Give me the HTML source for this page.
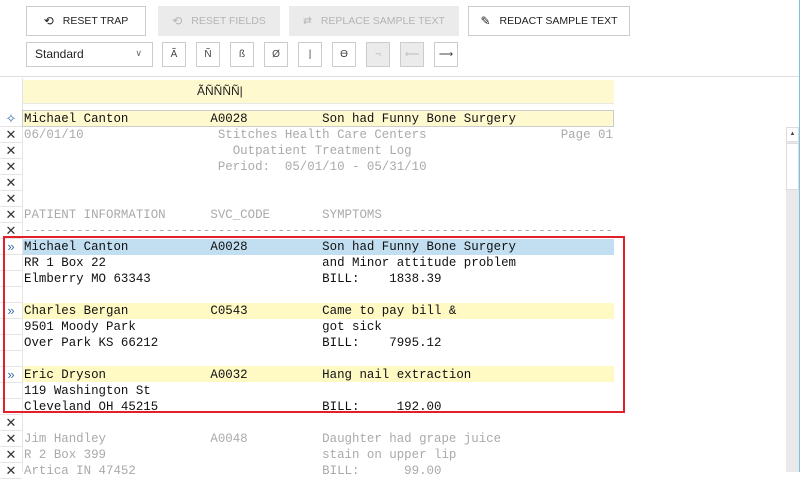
<!DOCTYPE html>
<html><head><meta charset="utf-8"><style>
body{margin:0;width:800px;height:472px;overflow:hidden;background:#fff;font-family:"Liberation Sans",sans-serif;position:relative}
.b{position:absolute;top:6px;height:30px;box-sizing:border-box;border:1px solid #ccc;background:#fff;font-size:10.5px;color:#222;display:flex;align-items:center;justify-content:center;gap:9px}
.b.d{background:#ebebeb;border-color:#ebebeb;color:#b5b5b5}
.s{position:absolute;top:42px;width:24px;height:25px;box-sizing:border-box;border:1px solid #ccc;background:#fff;font-size:10px;color:#444;display:flex;align-items:center;justify-content:center}
.s.d{background:#ebebeb;color:#bbb}
.m{position:absolute;left:24px;font-family:"Liberation Mono",monospace;font-size:12.43px;white-space:pre;line-height:16px;color:#111}
.g{color:#aaa}
.hl{position:absolute;left:23px;width:591px;height:16px}
.gut{position:absolute;left:0;width:22px;height:16px;border-bottom:1px solid #e4e4e4;box-sizing:border-box;font-size:13px;color:#333;text-align:center;line-height:15px}
</style></head><body>
<div class="b" style="left:26px;width:120px"><span style="font-size:12px">⟲</span>RESET TRAP</div>
<div class="b d" style="left:158px;width:122px"><span style="font-size:12px">⟲</span>RESET FIELDS</div>
<div class="b d" style="left:289px;width:170px"><span>⇄</span>REPLACE SAMPLE TEXT</div>
<div class="b" style="left:468px;width:162px"><span style="font-size:12px">✎</span>REDACT SAMPLE TEXT</div>
<div style="position:absolute;left:26px;top:42px;width:127px;height:25px;box-sizing:border-box;border:1px solid #ccc;font-size:12px;color:#222;line-height:23px;padding-left:8px">Standard<span style="position:absolute;right:10px;top:-1px;font-size:9px;color:#666">∨</span></div>
<div class="s" style="left:162px">Ã</div><div class="s" style="left:196px">Ñ</div><div class="s" style="left:230px">ß</div><div class="s" style="left:264px">Ø</div><div class="s" style="left:298px">|</div><div class="s" style="left:332px">ϴ</div><div class="s d" style="left:366px">¬</div><div class="s d" style="left:400px">⟵</div><div class="s" style="left:434px">⟶</div>
<div style="position:absolute;left:0;top:76px;width:800px;height:1px;background:#ddd"></div>
<div style="position:absolute;left:23px;top:80px;width:591px;height:23px;background:#fff9cf;border-bottom:1px solid #e8e8e8"></div>
<div style="position:absolute;left:197px;top:84px;font-size:12px;color:#222">ÃÑÑÑÑ|</div>
<div style="position:absolute;left:22px;top:78px;width:1px;height:394px;background:#e4e4e4"></div>
<div style="position:absolute;left:22px;top:110px;width:592px;height:17px;box-sizing:border-box;border:1px solid #ccc;background:#fff9cf"></div>
<div class="hl" style="top:239px;background:#c2dff1"></div>
<div class="hl" style="top:303px;background:#fff9c4"></div>
<div class="hl" style="top:366px;background:#fff9c4"></div>
<div class="gut" style="top:111px;color:#3a6ea5">✧</div>
<div class="gut" style="top:127px">✕</div><div class="gut" style="top:143px">✕</div><div class="gut" style="top:159px">✕</div><div class="gut" style="top:175px">✕</div><div class="gut" style="top:191px">✕</div><div class="gut" style="top:207px">✕</div><div class="gut" style="top:223px">✕</div>
<div class="gut" style="top:239px;color:#3a6ea5">»</div><div class="gut" style="top:255px"></div><div class="gut" style="top:271px"></div><div class="gut" style="top:287px"></div>
<div class="gut" style="top:303px;color:#3a6ea5">»</div><div class="gut" style="top:319px"></div><div class="gut" style="top:335px"></div><div class="gut" style="top:351px"></div>
<div class="gut" style="top:367px;color:#3a6ea5">»</div><div class="gut" style="top:383px"></div><div class="gut" style="top:399px"></div>
<div class="gut" style="top:415px">✕</div><div class="gut" style="top:431px">✕</div><div class="gut" style="top:447px">✕</div><div class="gut" style="top:463px">✕</div>
<div class="m" style="top:111px">Michael Canton           A0028          Son had Funny Bone Surgery</div>
<div class="m g" style="top:127px">06/01/10                  Stitches Health Care Centers                  Page 01
                            Outpatient Treatment Log
                          Period:  05/01/10 - 05/31/10


PATIENT INFORMATION      SVC_CODE       SYMPTOMS
-------------------------------------------------------------------------------</div>
<div class="m" style="top:239px">Michael Canton           A0028          Son had Funny Bone Surgery
RR 1 Box 22                             and Minor attitude problem
Elmberry MO 63343                       BILL:    1838.39

Charles Bergan           C0543          Came to pay bill &amp;
9501 Moody Park                         got sick
Over Park KS 66212                      BILL:    7995.12

Eric Dryson              A0032          Hang nail extraction
119 Washington St
Cleveland OH 45215                      BILL:     192.00</div>
<div class="m g" style="top:431px">Jim Handley              A0048          Daughter had grape juice
R 2 Box 399                             stain on upper lip
Artica IN 47452                         BILL:      99.00</div>
<div style="position:absolute;left:3px;top:236px;width:622px;height:177px;box-sizing:border-box;border:2px solid #e0202a"></div>
<div style="position:absolute;left:786px;top:127px;width:13px;height:345px;background:#e9e9e9"></div>
<div style="position:absolute;left:786px;top:127px;width:13px;height:15px;background:#fff;border:1px solid #ddd;box-sizing:border-box;font-size:6px;text-align:center;line-height:13px;color:#444">▲</div>
<div style="position:absolute;left:786px;top:143px;width:13px;height:47px;background:#fff;border:1px solid #ddd;box-sizing:border-box"></div>
<div style="position:absolute;left:799px;top:0;width:1px;height:472px;background:#7ec3dc"></div>
</body></html>
